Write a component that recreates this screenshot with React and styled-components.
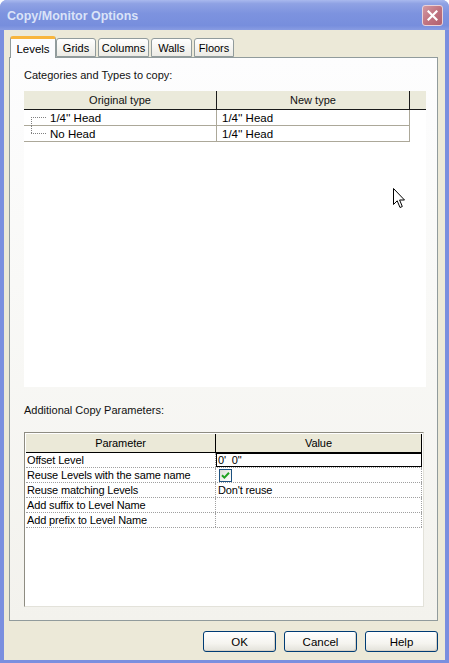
import React from "react";
import styled, { createGlobalStyle } from "styled-components";

const GlobalStyle = createGlobalStyle`
  html, body {
    margin: 0;
    padding: 0;
    background: #ffffff;
  }
  * {
    box-sizing: border-box;
  }
`;

const UI_FONT = `"Liberation Sans", Arial, sans-serif`;

const Window = styled.div`
  position: relative;
  width: 449px;
  height: 663px;
  display: flex;
  flex-direction: column;
  background: #7a8fdf;
  border-radius: 7px 7px 0 0;
  overflow: hidden;
  font-family: ${UI_FONT};
  font-size: 11px;
  color: #000;
`;

const TitleBar = styled.div`
  height: 30px;
  flex: none;
  display: flex;
  align-items: center;
  justify-content: space-between;
  padding: 0 6px 0 7px;
  background: linear-gradient(
    to bottom,
    #a9b9ee 0%,
    #8fa2e4 12%,
    #7d93df 45%,
    #778edd 85%,
    #889ce2 100%
  );
`;

const Title = styled.span`
  font-family: ${UI_FONT};
  font-weight: bold;
  font-size: 12.5px;
  color: #dae3f8;
  margin-top: 2px;
`;

const CloseButton = styled.div`
  width: 21px;
  height: 21px;
  border-radius: 3px;
  border: 1px solid #e9d2d8;
  background: linear-gradient(135deg, #d49aa3 0%, #c07481 50%, #b2606e 100%);
  display: flex;
  align-items: center;
  justify-content: center;
  margin-top: 1px;
`;

const Client = styled.div`
  flex: 1;
  margin: 0 4px 3px 4px;
  background: #ece9d8;
  display: flex;
  flex-direction: column;
  padding: 6px 7px 8px 5px;
`;

const TabStrip = styled.div`
  height: 21px;
  display: flex;
  align-items: flex-end;
  padding-left: 1px;
  gap: 2px;
  position: relative;
  z-index: 1;
`;

const Tab = styled.div`
  width: ${(p) => p.$w}px;
  height: ${(p) => (p.$active ? 22 : 19)}px;
  margin-bottom: ${(p) => (p.$active ? -1 : 0)}px;
  margin-right: ${(p) => (p.$active ? -2 : 0)}px;
  display: flex;
  align-items: center;
  justify-content: center;
  padding-top: ${(p) => (p.$active ? 0 : 1)}px;
  border: 1px solid #919b9c;
  border-bottom: ${(p) => (p.$active ? "none" : "1px solid #919b9c")};
  border-top: ${(p) => (p.$active ? "3px solid #f8b53c" : "1px solid #919b9c")};
  border-radius: 3px 3px 0 0;
  background: ${(p) =>
    p.$active ? "#fcfcfe" : "linear-gradient(to bottom, #ffffff, #ecebe5)"};
  font-size: ${(p) => (p.$active ? 11.5 : 11)}px;
  color: #000;
`;

const TabPanel = styled.div`
  height: 564px;
  border: 1px solid #919b9c;
  background: linear-gradient(to bottom, #fdfdfe 0%, #f9f9f7 40%, #f3f2ed 100%);
  display: flex;
  flex-direction: column;
  padding: 11px 10px 0 14px;
`;

const SectionLabel = styled.div`
  height: 13px;
  line-height: 13px;
  font-size: 11px;
  color: #111;
  margin-bottom: ${(p) => p.$gap}px;
`;

const ListBox = styled.div`
  width: 402px;
  height: 296px;
  background: #ffffff;
  margin-bottom: 17px;
`;

const ListHeader = styled.div`
  display: grid;
  grid-template-columns: 193px 193px 1fr;
  height: 19px;
  background: #ebeadb;
  border-bottom: 1px solid #1a1a1a;
`;

const ListHeaderCell = styled.div`
  display: flex;
  align-items: center;
  justify-content: center;
  border-right: ${(p) => (p.$last ? "none" : "1px solid #1a1a1a")};
  font-size: 11px;
  color: #111;
`;

const ListRow = styled.div`
  display: grid;
  grid-template-columns: 193px 193px;
  width: 386px;
  height: 16px;
`;

const ListCell = styled.div`
  position: relative;
  display: flex;
  align-items: center;
  padding-left: ${(p) => (p.$tree ? 26 : 5)}px;
  border-right: 1px solid #aca899;
  border-bottom: 1px solid #aca899;
  font-size: 11.5px;
  white-space: nowrap;

  ${(p) =>
    p.$tree &&
    `
    &::before {
      content: "";
      position: absolute;
      left: 7px;
      top: 7px;
      width: 15px;
      border-top: 1px dotted #808080;
    }
    &::after {
      content: "";
      position: absolute;
      left: 7px;
      top: ${p.$tree === "first" ? "7px" : "-1px"};
      height: ${p.$tree === "first" ? "9px" : "8px"};
      border-left: 1px dotted #808080;
    }
  `}
`;

const GridBox = styled.div`
  width: 400px;
  height: 175px;
  background: #ffffff;
  border: 1px solid;
  border-color: #8e8c82 #e3e2da #e3e2da #8e8c82;
  padding: 1px;
`;

const GridHeader = styled.div`
  display: grid;
  grid-template-columns: 190px 1fr;
  height: 19px;
  background: #ebe9d8;
  border-bottom: 1px solid #000;
`;

const GridHeaderCell = styled.div`
  display: flex;
  align-items: center;
  justify-content: center;
  border-right: 1px solid #000;
  font-size: 11px;
  letter-spacing: -0.1px;
`;

const GridRow = styled.div`
  display: grid;
  grid-template-columns: 190px 1fr;
  height: 15px;
  border-bottom: 1px dotted #a0a0a0;
`;

const GridCell = styled.div`
  display: flex;
  align-items: center;
  padding-left: ${(p) => (p.$value ? 2 : 1)}px;
  border-right: 1px dotted #a0a0a0;
  font-size: 11px;
  letter-spacing: -0.15px;
  white-space: pre;
  ${(p) => p.$editing && `outline: 1px solid #000; outline-offset: -1px;`}
`;

const CheckBox = styled.span`
  width: 13px;
  height: 13px;
  margin-left: 1px;
  margin-top: 1px;
  border: 1px solid #1c5180;
  background: linear-gradient(135deg, #dcdcd7 0%, #f4f4f0 60%, #ffffff 100%);
  display: flex;
  align-items: center;
  justify-content: center;
`;

const ButtonRow = styled.div`
  display: flex;
  justify-content: flex-end;
  gap: 8px;
  margin-top: 10px;
`;

const Button = styled.button`
  width: 73px;
  height: 21px;
  padding: 0;
  border: 1px solid #003c74;
  border-radius: 3px;
  background: linear-gradient(to bottom, #ffffff 0%, #f5f4ef 60%, #e3e2da 100%);
  box-shadow: inset -1px -1px 0 #d6d0c5;
  font-family: ${UI_FONT};
  font-size: 11.5px;
  color: #000;
`;

const Cursor = styled.svg`
  position: absolute;
  left: 393px;
  top: 188px;
`;

const tabs = [
  { label: "Levels", w: 46, active: true },
  { label: "Grids", w: 40 },
  { label: "Columns", w: 51 },
  { label: "Walls", w: 41 },
  { label: "Floors", w: 40 },
];

const typeRows = [
  { original: "1/4'' Head", next: "1/4'' Head", tree: "first" },
  { original: "No Head", next: "1/4'' Head", tree: "last" },
];

const params = [
  { name: "Offset Level", value: "0'  0\"", editing: true },
  { name: "Reuse Levels with the same name", check: true },
  { name: "Reuse matching Levels", value: "Don't reuse" },
  { name: "Add suffix to Level Name", value: "" },
  { name: "Add prefix to Level Name", value: "" },
];

export default function App() {
  return (
    <>
      <GlobalStyle />
      <Window>
        <TitleBar>
          <Title>Copy/Monitor Options</Title>
          <CloseButton>
            <svg width="11" height="11" viewBox="0 0 11 11">
              <path
                d="M1.5 1.5 L9.5 9.5 M9.5 1.5 L1.5 9.5"
                stroke="#ffffff"
                strokeWidth="2.2"
                strokeLinecap="square"
              />
            </svg>
          </CloseButton>
        </TitleBar>

        <Client>
          <TabStrip>
            {tabs.map((t) => (
              <Tab key={t.label} $w={t.w} $active={t.active}>
                {t.label}
              </Tab>
            ))}
          </TabStrip>

          <TabPanel>
            <SectionLabel $gap={9}>Categories and Types to copy:</SectionLabel>
            <ListBox>
              <ListHeader>
                <ListHeaderCell>Original type</ListHeaderCell>
                <ListHeaderCell>New type</ListHeaderCell>
                <ListHeaderCell $last />
              </ListHeader>
              {typeRows.map((r) => (
                <ListRow key={r.original}>
                  <ListCell $tree={r.tree}>{r.original}</ListCell>
                  <ListCell>{r.next}</ListCell>
                </ListRow>
              ))}
            </ListBox>

            <SectionLabel $gap={15}>Additional Copy Parameters:</SectionLabel>
            <GridBox>
              <GridHeader>
                <GridHeaderCell>Parameter</GridHeaderCell>
                <GridHeaderCell>Value</GridHeaderCell>
              </GridHeader>
              {params.map((p) => (
                <GridRow key={p.name}>
                  <GridCell>{p.name}</GridCell>
                  <GridCell $value $editing={p.editing}>
                    {p.check ? (
                      <CheckBox>
                        <svg width="9" height="9" viewBox="0 0 9 9">
                          <path
                            d="M1 4.2 L3.4 6.6 L8 1.8"
                            fill="none"
                            stroke="#21a121"
                            strokeWidth="2"
                          />
                        </svg>
                      </CheckBox>
                    ) : (
                      p.value
                    )}
                  </GridCell>
                </GridRow>
              ))}
            </GridBox>
          </TabPanel>

          <ButtonRow>
            <Button>OK</Button>
            <Button>Cancel</Button>
            <Button>Help</Button>
          </ButtonRow>
        </Client>

        <Cursor width="13" height="21" viewBox="0 0 13 21">
          <path
            d="M0.5 0.5 L0.5 16.5 L4.2 12.8 L7 19.5 L9.3 18.5 L6.6 12 L11.5 12 Z"
            fill="#ffffff"
            stroke="#000000"
            strokeWidth="1"
            strokeLinejoin="miter"
          />
        </Cursor>
      </Window>
    </>
  );
}
